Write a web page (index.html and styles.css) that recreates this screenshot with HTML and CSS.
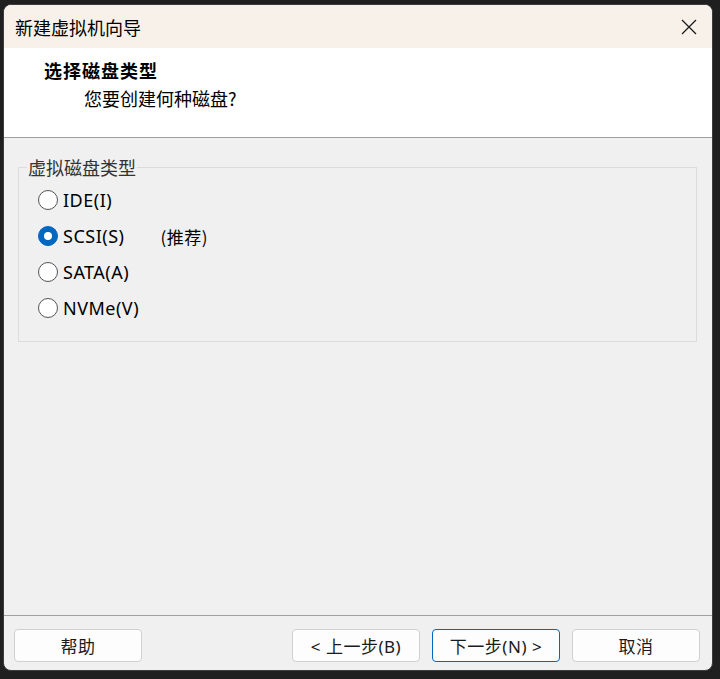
FILE: index.html
```html
<!DOCTYPE html>
<html>
  <head>
    <title>新建虚拟机向导</title>
    <link rel="stylesheet" href="styles.css">
  </head>
  <body>
    <div class="window">
      <div class="titlebar">
        <span class="title">新建虚拟机向导</span>
        <button class="close" aria-label="关闭">
          <svg width="16" height="16" viewBox="0 0 16 16">
            <path d="M1 1 L15 15 M15 1 L1 15" stroke="#1a1a1a" stroke-width="1.3" fill="none" />
          </svg>
        </button>
      </div>

      <div class="header">
        <div class="heading">选择磁盘类型</div>
        <div class="subheading">您要创建何种磁盘?</div>
      </div>

      <div class="content">
        <fieldset class="group">
          <legend>虚拟磁盘类型</legend>
          <label class="option">
            <span class="radio"></span>
            <span class="label">IDE(I)</span>
          </label>
          <label class="option">
            <span class="radio checked"></span>
            <span class="label">SCSI(S)</span>
            <span class="hint">(推荐)</span>
          </label>
          <label class="option">
            <span class="radio"></span>
            <span class="label">SATA(A)</span>
          </label>
          <label class="option">
            <span class="radio"></span>
            <span class="label">NVMe(V)</span>
          </label>
        </fieldset>
      </div>

      <div class="footer">
        <button class="btn">帮助</button>
        <div class="nav">
          <button class="btn">&lt; 上一步(B)</button>
          <button class="btn focused">下一步(N) &gt;</button>
          <button class="btn">取消</button>
        </div>
      </div>
    </div>
  </body>
</html>
```

FILE: styles.css
```css
html,
body {
  margin: 0;
  height: 100%;
}
body {
  background-color: #1f1f1f;
  font-family: "Noto Sans", "Noto Sans CJK SC", sans-serif;
  color: #000;
  padding: 4px 7px 8px 3px;
  box-sizing: border-box;
  display: flex;
}
.window {
  flex: 1;
  display: flex;
  flex-direction: column;
  background-color: #f0f0f0;
  border: 1px solid #3c3c3c;
  border-radius: 8px;
  overflow: hidden;
}
.titlebar {
  height: 43px;
  display: flex;
  align-items: center;
  justify-content: space-between;
  padding-left: 11px;
  background-color: #f7f1ea;
}
.title {
  font-size: 18px;
  font-family: "Noto Sans CJK SC", sans-serif;
}
.close {
  width: 46px;
  height: 43px;
  border: none;
  background: transparent;
  display: flex;
  justify-content: center;
  align-items: center;
  padding: 0;
}
.header {
  height: 89px;
  background-color: #fff;
  border-bottom: 1px solid #a0a0a0;
  font-family: "Noto Sans CJK SC", serif;
}
.heading {
  font-size: 18px;
  font-weight: bold;
  letter-spacing: 1px;
  padding: 10px 0 0 40px;
  line-height: 24px;
}
.subheading {
  font-size: 18px;
  padding: 4px 0 0 80px;
  line-height: 24px;
}
.content {
  flex: 1;
  padding: 17px 15px 0 14px;
  border-bottom: 1px solid #a0a0a0;
}
.group {
  margin: 0;
  padding: 9px 0 21px 19px;
  border: 1px solid #dcdcdc;
  display: flex;
  flex-direction: column;
  gap: 12px;
}
.group legend {
  font-family: "Noto Sans CJK SC", sans-serif;
  font-size: 18px;
  color: #333;
  padding: 0 1px;
  margin-left: -11px;
  line-height: 24px;
}
.option {
  display: flex;
  align-items: center;
  height: 24px;
  font-size: 18px;
  letter-spacing: 0.5px;
}
.radio {
  width: 18px;
  height: 18px;
  border: 1px solid #555;
  border-radius: 50%;
  background-color: #fff;
  box-sizing: content-box;
  display: flex;
  justify-content: center;
  align-items: center;
  margin-right: 5px;
}
.radio.checked {
  background-color: #0067c0;
  border-color: #0067c0;
}
.radio.checked::after {
  content: "";
  width: 8px;
  height: 8px;
  border-radius: 50%;
  background-color: #fff;
}
.hint {
  margin-left: 36px;
  font-family: "Noto Sans CJK SC", sans-serif;
  font-size: 17px;
}
.footer {
  height: 54px;
  box-sizing: border-box;
  display: flex;
  justify-content: space-between;
  align-items: flex-start;
  padding: 13px 12px 0 10px;
}
.nav {
  display: flex;
  gap: 12px;
}
.btn {
  width: 128px;
  height: 33px;
  background-color: #fdfdfd;
  border: 1px solid #d0d0d0;
  border-radius: 4px;
  font-family: "Noto Sans", "Noto Sans CJK SC", sans-serif;
  font-size: 17px;
  letter-spacing: 0.5px;
  color: #1a1a1a;
  padding: 0;
}
.btn.focused {
  border-color: #0067c0;
}
```
